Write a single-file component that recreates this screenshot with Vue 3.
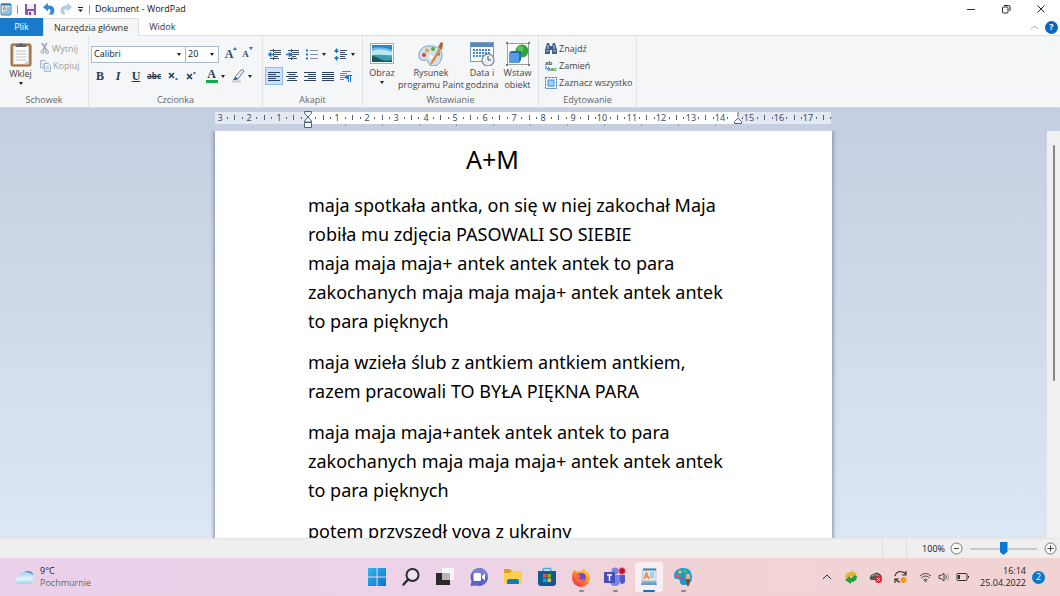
<script setup>
import { ref } from 'vue'

const font = ref('Calibri')
const size = ref('20')
const zoom = ref(100)

const CM = 29.43
const ZERO = 93
const rulerMarks = []
for (let q = -12; q <= 71; q++) {
  const x = Math.round(ZERO + (q * CM) / 4)
  if (x < 2 || x > 615 || q === 0 || q === 58) continue
  const kind = q % 4 === 0 ? 'num' : q % 2 === 0 ? 'half' : 'quarter'
  rulerMarks.push({ q, x, kind, label: Math.abs(q / 4) })
}
const tabStops = Array.from({ length: 11 }, (_, i) => 130 + i * 37)

const paragraphs = [
  [
    'maja spotkała antka, on się w niej zakochał Maja',
    'robiła mu zdjęcia PASOWALI SO SIEBIE',
    'maja maja maja+ antek antek antek to para',
    'zakochanych maja maja maja+ antek antek antek',
    'to para pięknych'
  ],
  ['maja wzieła ślub z antkiem antkiem antkiem,', 'razem pracowali TO BYŁA PIĘKNA PARA'],
  ['maja maja maja+antek antek antek to para', 'zakochanych maja maja maja+ antek antek antek', 'to para pięknych'],
  ['potem przyszedł vova z ukrainy']
]
const aligns = [
  { name: 'Do lewej', d: 'M0 1.5h12M0 3.5h8M0 5.5h12M0 7.5h8M0 9.5h12' },
  { name: 'Do środka', d: 'M1 1.5h10M2.500 3.5h7M0 5.5h12M2.500 7.5h7M1 9.5h10' },
  { name: 'Do prawej', d: 'M0 1.5h12M4 3.5h8M0 5.5h12M4 7.5h8M0 9.5h12' },
  { name: 'Wyjustuj', d: 'M0 1.5h12M0 3.5h12M0 5.5h12M0 7.5h12M0 9.5h12' }
]
</script>

<template>
  <div class="desktop">
    <header class="titlebar">
      <svg class="app-icon" width="12" height="13" viewBox="0 0 12 13">
        <rect x="1" y="1" width="10" height="11" rx="1" fill="#d8ebf8" stroke="#3e7fae" />
        <rect x="1" y="0.500" width="10" height="2" fill="#2f78ad" />
        <path d="M3 7l1.500-3.500L6 7M3.500 6h2" stroke="#e0812e" fill="none" />
        <path d="M7 5h3M7 7h3M3 9h7M1 11h10" stroke="#4b93c4" />
      </svg>
      <span class="bar"></span>
      <button class="save" aria-label="Zapisz">
        <svg width="11" height="11" viewBox="0 0 11 11">
          <path d="M0 0h11v11H1L0 10z" fill="#8758ac" />
          <rect x="2" y="0" width="7" height="5" fill="#f2eaf7" />
          <rect x="3" y="7" width="6" height="4" fill="#eee4f3" />
          <rect x="4" y="8" width="2" height="3" fill="#67418a" />
        </svg>
      </button>
      <button aria-label="Cofnij">
        <svg width="12" height="12" viewBox="0 0 12 12">
          <path d="M0 4L5 0v2.500c6-.5 8 4 5 9H5.500C8.500 8.500 8 6 5 6v2.500z" fill="#2f8bdc" />
        </svg>
      </button>
      <button aria-label="Ponów">
        <svg width="12" height="12" viewBox="0 0 12 12">
          <path d="M12 4L7 0v2.500C1 2 -1 6.500 2 11.500h3.500C3.500 8.500 4 6 7 6v2.500z" fill="#b7cade" />
        </svg>
      </button>
      <button aria-label="Dostosuj pasek">
        <svg width="7" height="7" viewBox="0 0 7 7"><path d="M1 1.5h5" stroke="#222" /><path d="M1 3.500h5L3.500 6z" fill="#222" /></svg>
      </button>
      <span class="bar"></span>
      <span class="title">Dokument - WordPad</span>
      <div class="window-buttons">
        <button aria-label="Minimalizuj"><svg width="10" height="10" viewBox="0 0 10 10"><path d="M1 5.500h8" stroke="#333" /></svg></button>
        <button aria-label="Przywróć">
          <svg width="10" height="10" viewBox="0 0 10 10" fill="none" stroke="#222"><rect x="1.500" y="3" width="5.500" height="6" rx="1" /><path d="M3 1.500h4.500q1.500 0 1.500 1.500V7" /></svg>
        </button>
        <button aria-label="Zamknij"><svg width="10" height="10" viewBox="0 0 10 10"><path d="M1.500 1.500l7 7M8.500 1.500l-7 7" stroke="#222" /></svg></button>
      </div>
    </header>

    <nav class="tabs">
      <button class="tab file">Plik</button>
      <button class="tab current">Narzędzia główne</button>
      <button class="tab">Widok</button>
      <div class="tab-tools">
        <button aria-label="Zwiń wstążkę"><svg width="9" height="6" viewBox="0 0 9 6"><path d="M1 5l3.500-3L8 5" fill="none" stroke="#aaa" /></svg></button>
        <button class="help" aria-label="Pomoc">?</button>
      </div>
    </nav>

    <section class="ribbon">
      <div class="group clipboard">
        <div class="body">
          <button class="big">
            <svg width="22" height="25" viewBox="0 0 22 25">
              <rect x="1" y="2" width="20" height="22" rx="1.500" fill="#b98350" stroke="#93623a" />
              <rect x="3.500" y="4.500" width="15" height="17.500" fill="#fafbfc" stroke="#ddd" stroke-width=".6" />
              <path d="M6 4V2.500h3Q11-1 13 2.500h3V5H6z" fill="#62666c" />
              <path d="M6 9h10M6 12h10M6 15h10M6 18h10" stroke="#bcc4cc" />
              <path d="M14 22l4.500-4v4z" fill="#ccd2d8" />
            </svg>
            <span>Wklej</span><i class="caret"></i>
          </button>
          <div class="stack disabled">
            <button>
              <svg width="10" height="11" viewBox="0 0 10 11" fill="none" stroke="#95a1b2"><path d="M2 0l4.500 7M7 0L3 7" stroke-width="1.500" /><circle cx="2.500" cy="8.800" r="1.500" /><circle cx="7" cy="8.800" r="1.500" /></svg>
              Wytnij
            </button>
            <button>
              <svg width="11" height="12" viewBox="0 0 11 12" fill="#f1f5fa" stroke="#a3b6cd"><path d="M.5.5h4l2 2V8h-6z" /><path d="M4.500 3.500h4l2 2v6h-6z" /><path d="M6 7h3M6 9h3M2 4h2M2 6h2" /></svg>
              Kopiuj
            </button>
          </div>
        </div>
        <h2>Schowek</h2>
      </div>

      <div class="group fonts">
        <div class="rows">
          <div class="row">
            <label class="combo name"><select v-model="font" aria-label="Rodzina czcionek"><option>Calibri</option><option>Arial</option></select><i class="caret"></i></label>
            <label class="combo size"><select v-model="size" aria-label="Rozmiar czcionki"><option>20</option><option>22</option></select><i class="caret"></i></label>
            <button class="grow" aria-label="Powiększ czcionkę">A<svg width="4" height="3" viewBox="0 0 4 3"><path d="M0 3l2-3 2 3z" fill="#1b74cf" /></svg></button>
            <button class="grow small" aria-label="Zmniejsz czcionkę">A<svg width="4" height="3" viewBox="0 0 4 3"><path d="M0 0l2 3 2-3z" fill="#1b74cf" /></svg></button>
          </div>
          <div class="row glyphs">
            <button aria-label="Pogrubienie"><b>B</b></button>
            <button aria-label="Kursywa"><b><em>I</em></b></button>
            <button aria-label="Podkreślenie"><b class="under">U</b></button>
            <button aria-label="Przekreślenie"><s>abc</s></button>
            <button class="script" aria-label="Indeks dolny">
              <svg width="10" height="10" viewBox="0 0 10 10"><path d="M1 2l5 5M6 2L1 7" stroke="#263a5a" stroke-width="1.600" /><path d="M7.500 7h2v2h-2z" fill="#1b74cf" /></svg>
            </button>
            <button class="script" aria-label="Indeks górny">
              <svg width="10" height="10" viewBox="0 0 10 10"><path d="M1 3l5 5M6 3L1 8" stroke="#263a5a" stroke-width="1.600" /><path d="M7.500 1h2v2h-2z" fill="#1b74cf" /></svg>
            </button>
            <button class="wide first" aria-label="Kolor tekstu"><b class="color">A</b><i class="caret"></i></button>
            <button class="wide" aria-label="Kolor wyróżnienia">
              <svg width="14" height="14" viewBox="0 0 14 14"><path d="M4 8l6-7q2-1 3 1L7 10z" fill="#e4ecf7" stroke="#6a82a6" /><path d="M4 8L2 11l2 .5L7 10z" fill="#415d85" /><path d="M1 12.500h9" stroke="#c8ccd2" stroke-width="2" /></svg>
              <i class="caret"></i>
            </button>
          </div>
        </div>
        <h2>Czcionka</h2>
      </div>

      <div class="group paragraph">
        <div class="rows">
          <div class="row icons">
            <button aria-label="Zmniejsz wcięcie">
              <svg width="13" height="11" viewBox="0 0 13 11"><path d="M2 1.500h11M6 3.500h7M6 5.500h7M6 7.500h4M2 9.500h9" stroke="#3a4e6e" /><path d="M0 5.500L3 3v2h3v1H3v2z" fill="#1877d2" stroke="#1877d2" stroke-width=".5" /><path d="M5.500 0v11" stroke="#3a4e6e" stroke-dasharray="1 1" /></svg>
            </button>
            <button aria-label="Zwiększ wcięcie">
              <svg width="13" height="11" viewBox="0 0 13 11"><path d="M2 1.500h11M6 3.500h7M6 5.500h7M6 7.500h4M2 9.500h9" stroke="#3a4e6e" /><path d="M6 5.500L3 3v2H0v1h3v2z" fill="#1877d2" stroke="#1877d2" stroke-width=".5" /><path d="M5.500 0v11" stroke="#3a4e6e" stroke-dasharray="1 1" /></svg>
            </button>
            <button class="menu" aria-label="Lista">
              <svg width="12" height="11" viewBox="0 0 12 11"><path d="M0 1.500h2M0 5.500h2M0 9.500h2" stroke="#1877d2" stroke-width="2" /><path d="M4 1.500h8M4 5.500h8M4 9.500h8" stroke="#8190a8" /></svg>
              <i class="caret"></i>
            </button>
            <button class="menu" aria-label="Odstępy między wierszami">
              <svg width="13" height="13" viewBox="0 0 13 13"><path d="M2.500 2v3M2.500 8v3" stroke="#1877d2" /><path d="M0 4l2.500-4L5 4zM0 9l2.500 4L5 9z" fill="#1877d2" /><path d="M6 2.500h7M6 4.500h5M6 6.500h7M6 8.500h5M6 10.500h6" stroke="#3a4e6e" /></svg>
              <i class="caret"></i>
            </button>
          </div>
          <div class="row icons">
            <button v-for="(a, i) in aligns" :key="a.name" :aria-label="a.name" :class="{ pressed: i === 0 }">
              <svg width="12" height="11" viewBox="0 0 12 11"><path :d="a.d" stroke="#2c4265" /></svg>
            </button>
            <button aria-label="Akapit">
              <svg width="12" height="12" viewBox="0 0 12 12"><path d="M2 1.500h9M0 3.500h7M0 5.500h5M0 7.500h5M0 9.500h4" stroke="#6d7f9b" /><path d="M8.500 12V5M10.500 12V5M7 5.500h5" stroke="#1877d2" fill="none" /><path d="M8 5v4Q5 9 5 7t3-2z" fill="#1877d2" /></svg>
            </button>
          </div>
        </div>
        <h2>Akapit</h2>
      </div>

      <div class="group insert">
        <div class="body">
          <button class="big image">
            <svg width="24" height="24" viewBox="0 0 24 24">
              <rect x=".5" y="1.500" width="23" height="20" fill="#f7f9fa" stroke="#a4afb9" />
              <rect x="2" y="3" width="20" height="17" fill="#68b6e6" />
              <path d="M2 3h20v5Q14 4 2 6z" fill="#2686cc" />
              <path d="M2 9q8-4 20 1v3H2z" fill="#bfe6f4" />
              <path d="M2 13q9-1 20 1v6H2z" fill="#3a9fb0" />
              <path d="M2 14q4 0 8 3t12 1v2H2z" fill="#1c5a52" />
            </svg>
            <span>Obraz</span><i class="caret"></i>
          </button>
          <button class="big paint">
            <svg width="26" height="24" viewBox="0 0 26 24">
              <path d="M13 4C4 3 0 10 1 15q1 4 5 3 3-1 4 2 1 4 5 4c6 0 9-6 9-11 0-5-5-9-11-9z" fill="#cfe0ef" stroke="#7c9fbd" />
              <circle cx="6" cy="13" r="2" fill="#d94430" /><circle cx="9" cy="8.500" r="2" fill="#eea324" /><circle cx="15" cy="7" r="2" fill="#53ad45" /><circle cx="20" cy="12" r="2" fill="#3a8bd8" /><circle cx="13" cy="15" r="2" fill="#fff" />
              <path d="M21 6L13 20l-1 3 3-2 8-13z" fill="#e58a35" /><path d="M20 5l3-5 2 1-1 7z" fill="#a26434" />
            </svg>
            <span>Rysunek<br />programu Paint</span>
          </button>
          <button class="big date">
            <svg width="25" height="24" viewBox="0 0 25 24">
              <rect x=".5" y=".5" width="23" height="19" fill="#fff" stroke="#7c98b8" /><path d="M1 1h22v4H1z" fill="#5588bd" />
              <path d="M3 8h18M3 11h18M3 14h18" stroke="#4385ce" stroke-width="2" stroke-dasharray="2 1" />
              <circle cx="18" cy="18" r="6" fill="#eef1f4" stroke="#87919a" stroke-width="1.300" /><path d="M18 14v4h3" fill="none" stroke="#46515b" />
            </svg>
            <span>Data i<br />godzina</span>
          </button>
          <button class="big object">
            <svg width="24" height="24" viewBox="0 0 24 24">
              <rect x="1.500" y="1.500" width="21" height="21" fill="#fff" stroke="#777" stroke-width=".7" />
              <circle cx="16" cy="9" r="6.500" fill="#2da338" /><circle cx="14.500" cy="7" r="3" fill="#58c455" />
              <path d="M3 11l2-2h10v9l-2 3H3z" fill="#2668b7" /><rect x="3" y="11" width="10" height="10" fill="#559be3" />
              <path d="M0 0h2v2H0zM22 0h2v2h-2zM0 22h2v2H0zM22 22h2v2h-2z" fill="#777" />
            </svg>
            <span>Wstaw<br />obiekt</span>
          </button>
        </div>
        <h2>Wstawianie</h2>
      </div>

      <div class="group editing">
        <div class="body">
          <div class="stack">
            <button>
              <svg width="12" height="11" viewBox="0 0 12 11"><path d="M2 0h2l1 3h2l1-3h2l2 7v4H7V7H5v4H0V7z" fill="#415e8b" /><path d="M1 8h3M8 8h3M3 2v4M9 2v4" stroke="#b5cbe6" /></svg>
              Znajdź
            </button>
            <button>
              <svg width="12" height="12" viewBox="0 0 12 12"><text x="0" y="5" class="mini">ab</text><text x="5" y="11" class="mini green">ac</text><path d="M1 6v3h3M3 7l2 2-2 2" fill="none" stroke="#1b74d1" /></svg>
              Zamień
            </button>
            <button>
              <svg width="12" height="12" viewBox="0 0 12 12"><rect x=".5" y=".5" width="11" height="11" fill="none" stroke="#2e6faf" stroke-dasharray="2 1" /><rect x="3" y="3" width="6" height="6" fill="#9bd0fa" stroke="#3a94e4" /></svg>
              Zaznacz wszystko
            </button>
          </div>
        </div>
        <h2>Edytowanie</h2>
      </div>
    </section>

    <main class="workspace">
      <div class="ruler-area">
        <svg class="ruler" width="617" height="23" viewBox="0 0 617 23">
          <rect x="0" y="4" width="616" height="12" fill="#e3e8f1" />
          <rect x="93" y="4" width="430" height="12" fill="#fff" />
          <template v-for="m in rulerMarks" :key="m.q">
            <text v-if="m.kind === 'num'" :x="m.x" y="13">{{ m.label }}</text>
            <rect v-else-if="m.kind === 'half'" :x="m.x" y="7" width="1" height="5" fill="#52617c" />
            <rect v-else :x="m.x" y="9" width="1" height="2" fill="#52617c" />
          </template>
          <rect v-for="x in tabStops" :key="x" :x="x" y="16" width="1" height="2" fill="#929eb3" />
          <g fill="#f5f7fa" stroke="#50647f">
            <path d="M89.500 3.500h7v2L93 9l-3.500-3.500zM93 9l3.500 4v1h-7v-1zM89.500 14.500h7v5h-7z" />
            <path d="M523 4v5M523 10l3.500 3.500v2h-7v-2z" />
          </g>
        </svg>
      </div>
      <div class="viewport">
        <div class="canvas">
          <article class="page">
            <h1>A+M</h1>
            <p v-for="(p, i) in paragraphs" :key="i">
              <template v-for="(line, j) in p" :key="j"><br v-if="j" />{{ line }}</template>
            </p>
          </article>
        </div>
        <div class="scrollbar"><div class="thumb"></div></div>
      </div>
    </main>

    <footer class="status">
      <span class="cell"></span>
      <label class="zoom-value" for="zoom">{{ zoom }}%</label>
      <button class="round" aria-label="Pomniejsz" @click="zoom = Math.max(10, zoom - 10)"><svg width="13" height="13" viewBox="0 0 13 13"><circle cx="6.500" cy="6.500" r="5.500" fill="#fafafa" stroke="#777" /><path d="M4 6.500h5" stroke="#444" /></svg></button>
      <input id="zoom" v-model.number="zoom" type="range" min="0" max="200" />
      <button class="round" aria-label="Powiększ" @click="zoom = Math.min(200, zoom + 10)"><svg width="13" height="13" viewBox="0 0 13 13"><circle cx="6.500" cy="6.500" r="5.500" fill="#fafafa" stroke="#777" /><path d="M3.500 6.500h6M6.500 3.500v6" stroke="#444" /></svg></button>
    </footer>

    <div class="taskbar">
      <button class="weather">
        <svg width="19" height="15" viewBox="0 0 19 15">
          <defs><linearGradient id="cloud" x1="0" y1="0" x2="0" y2="1"><stop offset="0" stop-color="#8fcbf1" /><stop offset=".6" stop-color="#e3f6fc" /><stop offset="1" stop-color="#9ed1ee" /></linearGradient></defs>
          <path d="M4 14q-4 0-4-3t4-4q1-4 5-5 7-3 9 2v7q0 3-4 3z" fill="url(#cloud)" /><path d="M9 2q7-3 9 2v1q-3-3-9-3z" fill="#4e91ce" />
        </svg>
        <span>9°C<small>Pochmurnie</small></span>
      </button>
      <div class="apps">
        <button aria-label="Start">
          <svg width="20" height="20" viewBox="0 0 20 20"><defs><linearGradient id="win" x2="1" y2="1"><stop stop-color="#35b5ee" /><stop offset="1" stop-color="#0774ca" /></linearGradient></defs><path d="M1 1h8.500v8.500H1zM10.500 1H19v8.500h-8.500zM1 10.500h8.500V19H1zM10.500 10.500H19V19h-8.500z" fill="url(#win)" /></svg>
        </button>
        <button aria-label="Szukaj">
          <svg width="20" height="20" viewBox="0 0 20 20" fill="none" stroke="#2b2b2e"><circle cx="11.500" cy="8" r="6" stroke-width="2" fill="#eee2f0" /><path d="M7 12.500L2.500 17.500" stroke-width="2.500" stroke-linecap="round" /></svg>
        </button>
        <button aria-label="Widok zadań">
          <svg width="20" height="20" viewBox="0 0 20 20"><rect x="7" y="1" width="12" height="12" fill="#f7f7f7" /><rect x="1" y="6" width="14" height="12" fill="#2a2a2a" /><rect x="7" y="6" width="8" height="7" fill="#b6b6b6" /></svg>
        </button>
        <button aria-label="Czat">
          <svg width="20" height="20" viewBox="0 0 20 20"><path d="M10 1a9 9 0 1 1-3 17.500L1.500 19l1-5A9 9 0 0 1 10 1z" fill="#5b62c6" /><path d="M10 1a9 9 0 0 1 9 9q-9-2-16-4a9 9 0 0 1 7-5z" fill="#7a80d8" /><rect x="4.500" y="6" width="7.500" height="8" rx="1.500" fill="#fff" /><path d="M13 9l3-2.500v7L13 11z" fill="#fff" /></svg>
        </button>
        <button aria-label="Eksplorator plików">
          <svg width="20" height="20" viewBox="0 0 20 20"><path d="M1 2h6l2 2h10v5H1z" fill="#dc9f1e" /><path d="M1 6h6l2-2h10v13H1z" fill="#fccf4a" /><path d="M4 17v-3q0-2 2-2h8q2 0 2 2v3z" fill="#1579bb" /></svg>
        </button>
        <button aria-label="Sklep">
          <svg width="20" height="20" viewBox="0 0 20 20"><path d="M6 5V3q0-1.500 1.500-1.500h5Q14 1.500 14 3v2" fill="none" stroke="#39b5e9" stroke-width="1.500" /><path d="M1 4h18v12q0 3-3 3H4q-3 0-3-3z" fill="#115b94" /><path d="M6 7h3.500v3.500H6z" fill="#f25325" /><path d="M10.500 7H14v3.500h-3.500z" fill="#80bb0a" /><path d="M6 11.500h3.500V15H6z" fill="#05a6ef" /><path d="M10.500 11.500H14V15h-3.500z" fill="#ffb902" /></svg>
        </button>
        <button class="running" aria-label="Firefox">
          <svg width="20" height="20" viewBox="0 0 20 20"><defs><linearGradient id="fox" x1=".9" y1="0" x2=".2" y2="1"><stop stop-color="#ffe13c" /><stop offset=".5" stop-color="#ff8a2a" /><stop offset="1" stop-color="#ee2859" /></linearGradient></defs><path d="M3 3l3 2q2-1 5-1l1-3q3 2 4 5l1-1q2 3 2 6a9 9 0 0 1-18 0q0-5 2-8z" fill="url(#fox)" /><circle cx="10.500" cy="10.500" r="4.500" fill="#7547d5" /><path d="M5 8l5 .5-2 3q3 2 6 0-1 4-5 4-5-1-4-7.500z" fill="#ff6b37" /></svg>
        </button>
        <button class="running" aria-label="Teams">
          <svg width="22" height="20" viewBox="0 0 22 20"><circle cx="11" cy="4" r="3.500" fill="#7b83eb" /><path d="M13 8h8v6q0 3-4 3z" fill="#5059c9" /><path d="M6 8h10v6q0 5-5 5t-5-5z" fill="#7b83eb" /><rect x="0" y="5" width="11" height="11" rx="1" fill="#464eb8" /><path d="M3 8h5M5.500 8v6" stroke="#fff" stroke-width="1.500" /><circle cx="18" cy="4" r="3.500" fill="#c4122f" stroke="#e4a0ae" /></svg>
        </button>
        <button class="running active" aria-label="WordPad">
          <svg width="20" height="20" viewBox="0 0 20 20"><path d="M4 2h13v12H3z" fill="#dcebf4" stroke="#9dbcd1" stroke-width=".7" /><path d="M4 1.500h13v2H4z" fill="#3f86b6" /><path d="M5 12l2.500-6L10 12M6 10h3" fill="none" stroke="#ed8638" stroke-width="1.500" /><path d="M11 6h4M11 8h4M11 10h4" stroke="#78aacb" /><path d="M3 14h14l1 4H2z" fill="#6c9ab8" /><path d="M3 15h14" stroke="#a9cbe0" /></svg>
        </button>
        <button class="running" aria-label="Paint">
          <svg width="20" height="20" viewBox="0 0 20 20"><path d="M10 1C4 1 1 5 1 9q0 3 3 3 3 0 3 3 0 3 4 3 8 0 8-8 0-9-9-9z" fill="#1a9bd9" /><circle cx="4.500" cy="9" r="1.700" fill="#ed5b33" /><circle cx="7" cy="5" r="1.700" fill="#f6c331" /><circle cx="12" cy="4" r="1.700" fill="#4ec05b" /><circle cx="9" cy="11" r="1.500" fill="#ed3f43" /><path d="M13 7h4v6h-4z" fill="#e3b47f" /><path d="M13 12h4l-1 7h-2z" fill="#864c29" /></svg>
        </button>
      </div>
      <div class="tray">
        <button aria-label="Ukryte ikony"><svg width="12" height="12" viewBox="0 0 12 12"><path d="M2 8l4-4 4 4" fill="none" stroke="#333" /></svg></button>
        <button aria-label="Aktualizacja"><svg width="14" height="14" viewBox="0 0 14 14"><path d="M1 8q0-6 6-6V0l6 4-5 4V6Q5 6 4 9z" fill="#e8b62d" /><path d="M13 6q0 6-6 6v2L1 10l5-4v2q3 0 4-3z" fill="#279f45" /></svg></button>
        <button aria-label="OneDrive"><svg width="14" height="14" viewBox="0 0 14 14"><path d="M2 10q-2-1-1-3 0-2 3-3 4-3 7 0 2 1 2 4-1 2-3 2z" fill="#555" /><path d="M3 6q3-3 7 0" stroke="#aaa" fill="none" /><circle cx="9.500" cy="9.500" r="3.500" fill="#dc2839" /><path d="M8 8l3 3M11 8l-3 3" stroke="#fff" /></svg></button>
        <button aria-label="Windows Update"><svg width="14" height="14" viewBox="0 0 14 14" fill="none" stroke="#333" stroke-width="1.200"><path d="M1 6q1-4 5-4.500 4 0 6 3M12 1v4H8M6 12Q3 12 2 9M1 13V9h4" /><circle cx="9.500" cy="10" r="3" fill="#f39b18" stroke="none" /></svg></button>
        <button class="net" aria-label="Sieć, głośność, bateria">
          <svg width="13" height="12" viewBox="0 0 13 12" fill="none" stroke="#444"><path d="M1 5q5.500-5 11 0M2.500 7q4-4 8 0M4.500 9q2-2 4 0" /><circle cx="6.500" cy="10" r="1" fill="#444" stroke="none" /></svg>
          <svg width="12" height="12" viewBox="0 0 12 12" fill="none" stroke="#444"><path d="M1 4.500h2L6 2v8L3 7.500H1z" /><path d="M7.500 4q2 2 0 4" /><path d="M9 2q3.500 4 0 8" stroke="#b5a3a6" /></svg>
          <svg width="13" height="10" viewBox="0 0 13 10"><rect x="1" y="1.500" width="10" height="7" rx="1" fill="none" stroke="#333" /><rect x="2" y="3" width="2" height="4" fill="#333" /><path d="M12.500 4v2" stroke="#333" /></svg>
        </button>
        <button class="clock">16:14<br />25.04.2022</button>
        <button class="badge" aria-label="Powiadomienia">2</button>
      </div>
    </div>
  </div>
</template>

<style>
html, body { margin: 0; }
</style>

<style scoped>
* { box-sizing: border-box; }
.desktop { display: flex; flex-direction: column; height: 100vh; overflow: hidden; font: 9px/12px "Open Sans", "Noto Sans", sans-serif; color: #333; background: #fff; }
button { display: inline-flex; align-items: center; justify-content: center; margin: 0; padding: 0; border: 0; background: none; color: inherit; font: inherit; white-space: nowrap; }
svg { flex: none; display: block; }
h1, h2, p { margin: 0; font-weight: 400; }
.caret { flex: none; width: 0; height: 0; border: 2px solid transparent; border-top: 3px solid #222; border-bottom: 0; }

.titlebar { display: flex; align-items: center; gap: 5px; height: 18px; flex: none; color: #111; }
.bar { width: 1px; height: 9px; background: #999; }
.save { margin: 0 2px; }
.window-buttons { margin-left: auto; display: flex; padding-right: 2px; }
.window-buttons button { width: 35px; height: 16px; }

.tabs { display: flex; height: 18px; flex: none; box-shadow: inset 0 -1px #dedfe1; }
.tab { padding: 0 10px; }
.tab.file { width: 43px; background: #1979ca; color: #fff; }
.tab.current { background: #f5f6f7; border: 1px solid #dedfe1; border-bottom: 0; }
.tab-tools { margin-left: auto; display: flex; align-items: center; gap: 6px; padding-right: 2px; }
.help { width: 13px; height: 13px; border-radius: 50%; background: #0a67c1; color: #fff; font-weight: 700; }

.ribbon { display: flex; flex: none; height: 72px; background: #f4f6f8; border-bottom: 1px solid #d5d9df; color: #444; }
.group { display: flex; flex-direction: column; border-right: 1px solid #e1e4e8; padding: 1px 2px; }
.group h2 { margin-top: auto; font-size: 9px; line-height: 13px; text-align: center; color: #666; }
.clipboard { width: 89px; }
.fonts { width: 174px; }
.paragraph { width: 100px; }
.insert { width: 176px; }
.editing { width: 98px; }
.body { display: flex; align-items: flex-start; }
.big { flex-direction: column; justify-content: flex-start; padding-top: 5px; }
.big svg { margin-bottom: 1px; }
.big .caret { margin-top: 2px; }
.clipboard .big { width: 37px; }
.image { width: 34px; }
.paint { width: 64px; }
.date { width: 38px; }
.object { width: 33px; }
.stack { display: flex; flex-direction: column; align-items: flex-start; padding: 3px 0 0 4px; }
.stack button { height: 17px; gap: 2px; }
.disabled { color: #9a9da2; padding-left: 1px; }
.mini { font: 700 6px "Noto Sans", sans-serif; fill: #555; }
.green { fill: #248b3c; }
.rows { display: flex; flex-direction: column; gap: 4px; padding: 8px 0 0; }
.row { display: flex; align-items: center; height: 18px; }
.combo { display: flex; align-items: center; height: 17px; border: 1px solid #a9bccf; background: #fff; padding-right: 4px; }
.combo + .combo { border-left: 0; }
.combo select { appearance: none; flex: 1; min-width: 0; height: 15px; margin: 0; padding: 0 2px; border: 0; background: none; font: inherit; color: #111; }
.name { width: 95px; }
.size { width: 33px; }
.grow { width: 18px; margin-left: 3px; align-items: flex-start; font: 700 12px/14px "Liberation Serif", serif; color: #32486b; }
.grow.small { width: 13px; margin-left: 1px; font-size: 9px; }
.glyphs button { width: 18px; height: 18px; font: 12px/14px "Liberation Serif", serif; color: #263a5a; }
.glyphs .under { text-decoration: underline; }
.glyphs s { font: 700 8px/12px "Open Sans", sans-serif; }
.glyphs .script { padding-left: 2px; }
.glyphs .wide { width: 26px; gap: 3px; }
.glyphs .first { margin-left: 3px; }
.glyphs .color { width: 12px; line-height: 11px; border-bottom: 3px solid #12ac50; }
.icons button { width: 18px; height: 18px; }
.icons .menu { width: 29px; gap: 4px; }
.icons .pressed { background: #cbe1f8; border: 1px solid #8ebbe9; }

.workspace { flex: 1; min-height: 0; display: flex; flex-direction: column; background: linear-gradient(#c5cee0, #dde7f3); }
.ruler-area { flex: none; padding-right: 13px; }
.ruler { margin: 0 auto; }
.ruler text { font: 9px "Noto Sans", sans-serif; fill: #3d4d69; text-anchor: middle; }
.viewport { flex: 1; min-height: 0; display: flex; }
.canvas { flex: 1; min-width: 0; overflow: hidden; }
.page { width: 617px; min-height: 100%; margin: 0 auto; padding: 11px 93px 0; background: #fff; box-shadow: 0 0 4px 1px #7c8ba6; color: #000; font: 18px/29px "Noto Sans", "Open Sans", sans-serif; }
.page h1 { padding-right: 62px; margin-bottom: 15px; text-align: center; font-size: 25px; line-height: 34px; }
.page p { margin-bottom: 12px; white-space: nowrap; }
.scrollbar { width: 13px; background: #f0f0f0; padding-top: 14px; }
.thumb { width: 2px; height: 60%; margin: 0 auto; background: #888; border-radius: 1px; }

.status { display: flex; align-items: center; flex: none; height: 20px; background: #efefef; border-top: 1px solid #e4e4e4; padding-right: 3px; }
.cell { width: 25px; height: 100%; margin-left: auto; border: 1px solid #dedede; border-width: 0 1px; }
.zoom-value { width: 38px; text-align: right; color: #111; }
.round { margin-left: 5px; }
.status input { appearance: none; width: 67px; height: 14px; margin: 0 2px 0 7px; background: linear-gradient(#c9c9c9, #c9c9c9) center / 100% 2px no-repeat; }
.status input::-webkit-slider-thumb { appearance: none; width: 8px; height: 13px; background: #0a78d7; clip-path: polygon(0 0, 100% 0, 100% 75%, 50% 100%, 0 75%); }

.taskbar { display: grid; grid-template-columns: 1fr auto 1fr; align-items: center; flex: none; height: 38px; background: linear-gradient(90deg, #ead1ea, #edd3e7 45%, #f1d3d7 60%, #f2d3d3); }
.weather { justify-self: start; gap: 6px; margin-left: 15px; text-align: left; color: #222; }
.weather small { display: block; font-size: 9px; color: #666; }
.apps { display: flex; }
.apps button { flex-direction: column; width: 28px; height: 30px; margin: 0 3px; border-radius: 3px; }
.running::after { content: ""; width: 5px; height: 2px; margin: 3px 0 -5px; border-radius: 1px; background: #888; }
.active { background: #f9eef2; }
.active::after { width: 12px; background: #0a73c8; }
.tray { justify-self: end; display: flex; align-items: center; gap: 11px; padding-right: 15px; color: #222; }
.net { gap: 6px; }
.clock { text-align: right; margin-right: -5px; }
.badge { width: 13px; height: 13px; border-radius: 50%; background: #0a78d0; color: #fff; }
</style>
